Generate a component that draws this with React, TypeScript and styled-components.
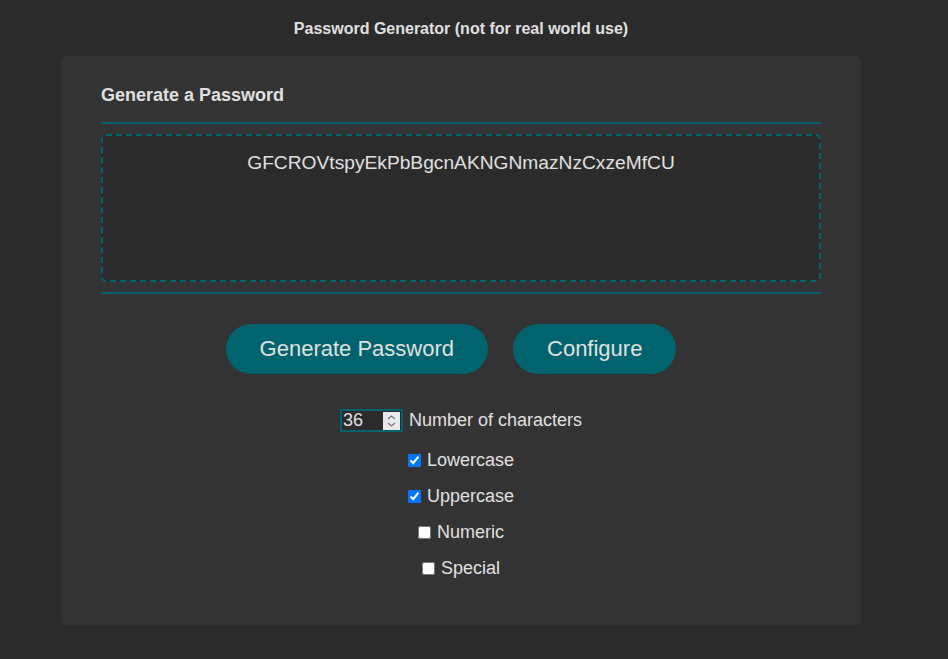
import React, { useState } from 'react';
import styled, { createGlobalStyle } from 'styled-components';

const GlobalStyle = createGlobalStyle`
  html, body {
    margin: 0;
    padding: 0;
    background-color: #2b2b2b;
    color: #e0e0e0;
    font-family: "Liberation Sans", Arial, sans-serif;
  }
`;

const teal = '#00636e';

const StPage = styled.div`
  width: 922px;
  min-height: 659px;
`;

const StTitle = styled.div`
  height: 56px;
  padding-top: 1px;
  box-sizing: border-box;
  display: flex;
  align-items: center;
  justify-content: center;
  font-size: 16px;
  font-weight: 700;
`;

const StCard = styled.div`
  width: 800px;
  box-sizing: border-box;
  margin: 0 auto;
  padding: 29px 40px 39px;
  background-color: #333333;
  border-radius: 5px;
`;

const StHeading = styled.div`
  font-size: 18px;
  font-weight: 700;
  line-height: 20px;
  margin-bottom: 17px;
`;

const StOutputWrap = styled.div`
  border-top: 2px solid ${teal};
  border-bottom: 2px solid ${teal};
  padding: 10px 0;
`;

const StOutput = styled.div`
  height: 148px;
  box-sizing: border-box;
  border: 2px dashed ${teal};
  border-radius: 5px;
  background-color: #2b2b2b;
  padding: 16px;
  text-align: center;
  font-size: 19.2px;
  line-height: 21px;
`;

const StButtonRow = styled.div`
  display: flex;
  justify-content: center;
  gap: 25px;
  margin-top: 30px;
  padding-right: 20px;
`;

const StButton = styled.button`
  height: 50px;
  padding: 0 34px;
  border: none;
  border-radius: 25px;
  background-color: ${teal};
  color: #e0e0e0;
  font-family: inherit;
  font-size: 22px;
  cursor: pointer;
`;

const StLengthRow = styled.div`
  display: flex;
  justify-content: center;
  align-items: center;
  gap: 6px;
  margin-top: 35px;
  height: 23px;
  font-size: 18px;
`;

const StNumberBox = styled.div`
  display: flex;
  width: 63px;
  height: 23px;
  box-sizing: border-box;
  border: 2px solid ${teal};
  background-color: #2b2b2b;
`;

const StNumber = styled.input`
  flex: 1;
  min-width: 0;
  border: none;
  background: transparent;
  color: #e0e0e0;
  font-family: inherit;
  font-size: 18px;
  padding: 0 0 0 1px;
  outline: none;
  -moz-appearance: textfield;

  &::-webkit-inner-spin-button,
  &::-webkit-outer-spin-button {
    -webkit-appearance: none;
    margin: 0;
  }
`;

const StSpinner = styled.div`
  width: 17px;
  height: 18px;
  margin: 1px 1px 0 0;
  background-color: #e9e9ed;
  display: flex;
  align-items: center;
  justify-content: center;
`;

const StOptions = styled.div`
  margin-top: 10px;
`;

const StOption = styled.label`
  display: flex;
  justify-content: center;
  align-items: center;
  height: 36px;
  font-size: 18px;

  input {
    width: 13px;
    height: 13px;
    margin: 0 6px 0 0;
  }
`;

const App = () => {
  const [length, setLength] = useState(36);
  const [options, setOptions] = useState({
    Lowercase: true,
    Uppercase: true,
    Numeric: false,
    Special: false,
  });

  const toggle = (key: keyof typeof options) => {
    setOptions({ ...options, [key]: !options[key] });
  };

  return (
    <StPage>
      <GlobalStyle />
      <StTitle>Password Generator (not for real world use)</StTitle>
      <StCard>
        <StHeading>Generate a Password</StHeading>
        <StOutputWrap>
          <StOutput>GFCROVtspyEkPbBgcnAKNGNmazNzCxzeMfCU</StOutput>
        </StOutputWrap>
        <StButtonRow>
          <StButton>Generate Password</StButton>
          <StButton>Configure</StButton>
        </StButtonRow>
        <StLengthRow>
          <StNumberBox>
            <StNumber
              type="number"
              value={length}
              onChange={(e) => setLength(Number(e.target.value))}
            />
            <StSpinner>
              <svg width="9" height="14" viewBox="0 0 9 14" fill="none">
                <path
                  d="M1 5 L4.5 2 L8 5 M1 9 L4.5 12 L8 9"
                  stroke="#76767b"
                  strokeWidth="1.2"
                />
              </svg>
            </StSpinner>
          </StNumberBox>
          <span>Number of characters</span>
        </StLengthRow>
        <StOptions>
          {(Object.keys(options) as (keyof typeof options)[]).map((key) => (
            <StOption key={key}>
              <input
                type="checkbox"
                checked={options[key]}
                onChange={() => toggle(key)}
              />
              {key}
            </StOption>
          ))}
        </StOptions>
      </StCard>
    </StPage>
  );
};

export default App;
